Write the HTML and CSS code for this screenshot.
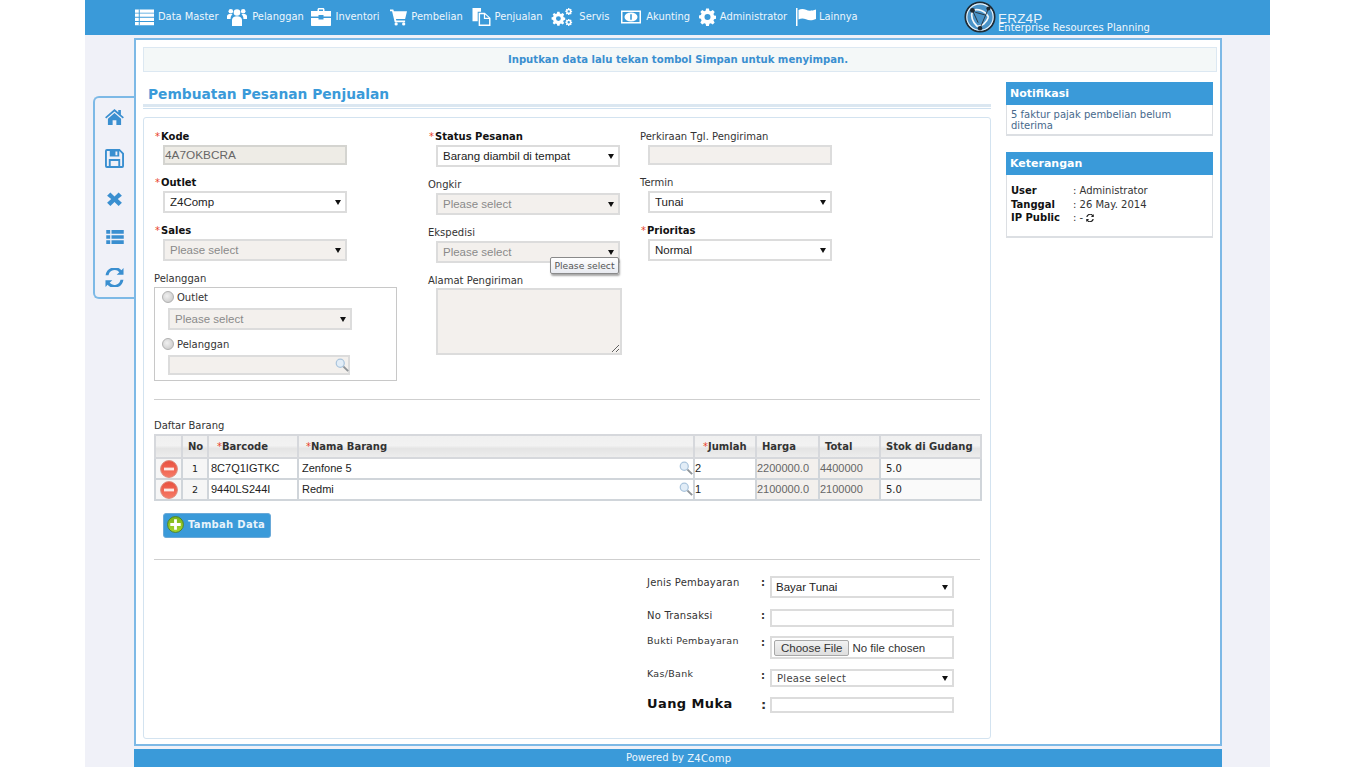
FILE: index.html
```html
<!DOCTYPE html>
<html lang="id">
<head>
<meta charset="utf-8">
<title>Pembuatan Pesanan Penjualan</title>
<link rel="stylesheet" href="styles.css">
</head>
<body>
<svg class="defs" width="0" height="0"><defs>
  <g id="lens"><path d="M9.500 9.500L15 15" stroke="#8f9498" stroke-width="2.200" fill="none"/><circle cx="6" cy="6" r="4.600" fill="#e2edf7" stroke="#aac4dc" stroke-width="1.400"/></g>
  <path id="cog" fill-rule="evenodd" d="M7.500 0h3l.5 2.400 1.500.6L14.600 1.700l2 2-1.300 2.100.7 1.500 2 .5v3l-2 .5-.7 1.500 1.300 2.100-2 2-2.100-1.300-1.500.6-.5 2.300h-3l-.5-2.300-1.500-.6-2.100 1.300-2-2 1.300-2.100L2 10.800l-2-.5v-3l2-.5.7-1.500L1.400 3.700l2-2L5.500 3 7 2.400zM9 5.800a3.200 3.200 0 100 6.400 3.200 3.200 0 000-6.400z"/>
  <path id="sync" d="M19.500 0v7.200h-7.200l2.800-2.800A6.600 6.600 0 003.700 7.700H.6A9.700 9.700 0 0117.300 2.300zM.5 20v-7.200h7.200l-2.800 2.800a6.600 6.600 0 0011.400-3.300h3.100A9.700 9.700 0 012.700 17.700z"/>
  <linearGradient id="redg" x1="0" y1="0" x2="0" y2="1"><stop offset="0" stop-color="#e8503f"/><stop offset="1" stop-color="#f77a66"/></linearGradient>
  <linearGradient id="greeng" x1="0" y1="0" x2="0" y2="1"><stop offset="0" stop-color="#7db41a"/><stop offset="1" stop-color="#a6d62e"/></linearGradient>
  <g id="minus"><circle cx="9" cy="9" r="8.400" fill="url(#redg)" stroke="#dc8a7c"/><path d="M4 7.600h10v2.800H4z" fill="#fbe9e6"/></g>
</defs></svg>
<div class="page">
  <header class="topbar">
    <nav class="nav">
      <a class="nav-item g4"><svg class="ni w19" viewBox="0 0 20 18"><path d="M0 1h20v3.400H0zM0 5.400h20v3.400H0zM0 9.800h20v3.400H0zM0 14.200h20v3.400H0z"/><path class="cut" d="M4.500 1v16.600"/></svg><span>Data Master</span></a>
      <a class="nav-item tight"><svg class="ni w20" viewBox="0 0 20 18"><circle cx="10" cy="4.500" r="3.300"/><circle cx="3.800" cy="3.300" r="2.300"/><circle cx="16.200" cy="3.300" r="2.300"/><path d="M5 18v-6c0-2.500 2-3.800 5-3.800s5 1.300 5 3.800v6zM0 11V8.200C0 6.600 1.600 6 3.800 6c.8 0 1.300.1 1.800.3-.9.700-1.800 1.800-2 3.800V11zM20 11V8.200c0-1.600-1.600-2.200-3.800-2.200-.8 0-1.300.1-1.800.3.900.7 1.800 1.800 2 3.800V11z"/></svg><span>Pelanggan</span></a>
      <a class="nav-item loose"><svg class="ni w20" viewBox="0 0 20 18"><path d="M6.500 3V1.500C6.500.7 7.200 0 8 0h4c.8 0 1.500.7 1.500 1.500V3H20v5.500H12.500V7h-5v1.500H0V3zM8 3h4V1.500H8zM0 10h7.500v1.500h5V10H20v7c0 .6-.4 1-1 1H1c-.6 0-1-.4-1-1z"/></svg><span>Inventori</span></a>
      <a class="nav-item g4"><svg class="ni w17" viewBox="0 0 18 18"><path d="M0 1h3.500l.6 2H18l-2 8H6.300l.4 1.600H16V14.500H5L2.200 3H0z"/><circle cx="6.500" cy="16.300" r="1.700"/><circle cx="14.500" cy="16.300" r="1.700"/></svg><span>Pembelian</span></a>
      <a class="nav-item g4"><svg class="ni w19" viewBox="0 0 19 19"><path d="M0 0h9v4H5.500v10H0z"/><path fill-rule="evenodd" d="M6.500 5H13l6 5.500V19H6.500zM8 6.500v11h9.500v-6h-5.500v-5zM13.300 6.800v3.500h3.900z"/></svg><span>Penjualan</span></a>
      <a class="nav-item g6"><svg class="ni w22" viewBox="0 0 22 19"><use href="#cog" transform="translate(0 4) scale(.8)"/><use href="#cog" transform="translate(14.500 0) scale(.4)"/><use href="#cog" transform="translate(14.500 11.500) scale(.4)"/></svg><span>Servis</span></a>
      <a class="nav-item"><svg class="ni w20" viewBox="0 0 20 15"><path fill-rule="evenodd" d="M0 1h20v13H0zM1.500 2.500v10h17v-10z"/><ellipse cx="10" cy="7.500" rx="6.500" ry="4.500"/><path class="money" d="M9.200 4.800h1.600v5.400H9.200z"/></svg><span>Akunting</span></a>
      <a class="nav-item g4"><svg class="ni w17" viewBox="0 0 18 18"><use href="#cog"/></svg><span>Administrator</span></a>
      <a class="nav-item g3"><svg class="ni w20" viewBox="0 0 20 18"><path d="M0 0h1.500v18H0zM2.500 2C5 .6 7.500.6 10 1.800s5.500 1.200 10-.3v9.500c-4 1.600-7 1.600-10 .3S5 10.300 2.500 11.500z"/></svg><span>Lainnya</span></a>
    </nav>
    <div class="brand">
      <svg class="logo" viewBox="0 0 34 34"><circle cx="17" cy="17" r="15.500" fill="#4a93c8" stroke="#1f2a33" stroke-width="2"/><circle cx="17" cy="17" r="14" fill="none" stroke="#e9f2f8" stroke-width="1.200"/><path d="M9 10c6-2 13 0 17 7M26 17c-2 6-7 10-12 10M14 27C9 22 7 16 9 10" fill="none" stroke="#f4f8fb" stroke-width="1.800"/><path d="M9 10l6 13M26 8l-3 7-11-3M17 29l6-14" fill="none" stroke="#26333d" stroke-width="1"/><circle cx="9" cy="10" r="2.600" fill="#1f2a33"/><circle cx="26" cy="8" r="2.200" fill="#1f2a33"/><circle cx="17" cy="29" r="2.400" fill="#1f2a33"/></svg>
      <div class="brand-text"><span class="brand-name">ERZ4P</span><span class="brand-sub">Enterprise Resources Planning</span></div>
    </div>
  </header>

  <div class="body-row">
    <aside class="toolbar">
      <svg class="tool t-home" viewBox="0 0 20 17"><path d="M10 0l4 3.500V1h2.800v5L20 8.800l-1.200 1.400L10 2.600 1.200 10.200 0 8.800zM3 10.300L10 4.300l7 6V17h-5v-5H8v5H3z"/></svg>
      <svg class="tool t-save" viewBox="0 0 20 20"><path fill-rule="evenodd" d="M2 0h13.500L20 4.500V18a2 2 0 01-2 2H2a2 2 0 01-2-2V2a2 2 0 012-2zM2 2v16h2v-7.500h12V18h2V5.300L15 2v5.800H5V2zM6 12.500V18h8v-5.500zM11 2.600v4h2v-4z"/></svg>
      <svg class="tool t-x" viewBox="0 0 18 17"><path d="M4 .5l5 5 5-5 4 4-5 4 5 4.500-4 4-5-5-5 5-4-4 5-4.500-5-4z"/></svg>
      <svg class="tool t-list" viewBox="0 0 20 16"><path d="M0 0h4.500v4.200H0zM6 0h14v4.200H6zM0 5.900h4.500v4.200H0zM6 5.900h14v4.200H6zM0 11.800h4.500V16H0zM6 11.800h14V16H6z"/></svg>
      <svg class="tool t-sync" viewBox="0 0 20 20"><use href="#sync"/></svg>
    </aside>

    <main class="panel">
      <div class="message">Inputkan data lalu tekan tombol Simpan untuk menyimpan.</div>
      <div class="columns">
        <section class="main-col">
          <h1 class="title">Pembuatan Pesanan Penjualan</h1>
          <form class="form-box">
            <div class="form-cols">
              <div class="col col-a">
                <div class="field"><label class="lbl req"><i>*</i>Kode</label><input class="ctl ro" type="text" value="4A7OKBCRA" readonly></div>
                <div class="field"><label class="lbl req"><i>*</i>Outlet</label><div class="sel"><select class="ctl pick"><option>Z4Comp</option></select></div></div>
                <div class="field"><label class="lbl req"><i>*</i>Sales</label><div class="sel"><select class="ctl pick off"><option>Please select</option></select></div></div>
                <div class="field-last"><label class="lbl">Pelanggan</label>
                  <div class="radio-box">
                    <label class="radio-line"><input class="radio" type="radio" name="p">Outlet</label>
                    <div class="sel"><select class="ctl pick off"><option>Please select</option></select></div>
                    <label class="radio-line second"><input class="radio" type="radio" name="p">Pelanggan</label>
                    <div class="search-box"><svg class="lens" viewBox="0 0 16 16"><use href="#lens"/></svg></div>
                  </div>
                </div>
              </div>
              <div class="col col-b">
                <div class="field"><label class="lbl req"><i>*</i>Status Pesanan</label><div class="sel"><select class="ctl pick"><option>Barang diambil di tempat</option></select></div></div>
                <div class="field"><label class="lbl">Ongkir</label><div class="sel"><select class="ctl pick off"><option>Please select</option></select></div></div>
                <div class="field tip-host"><label class="lbl">Ekspedisi</label><div class="sel"><select class="ctl pick off"><option>Please select</option></select></div><span class="tooltip">Please select</span></div>
                <div class="field-last"><label class="lbl">Alamat Pengiriman</label><textarea class="area"></textarea></div>
              </div>
              <div class="col col-c">
                <div class="field"><label class="lbl">Perkiraan Tgl. Pengiriman</label><input class="ctl off" type="text"></div>
                <div class="field"><label class="lbl">Termin</label><div class="sel"><select class="ctl pick"><option>Tunai</option></select></div></div>
                <div class="field"><label class="lbl req"><i>*</i>Prioritas</label><div class="sel"><select class="ctl pick"><option>Normal</option></select></div></div>
              </div>
            </div>
            <hr class="rule first">
            <div class="table-title">Daftar Barang</div>
            <table class="items">
              <colgroup><col class="c1"><col class="c2"><col class="c3"><col class="c4"><col class="c5"><col class="c6"><col class="c7"><col class="c8"></colgroup>
              <thead><tr><th></th><th class="h-no">No</th><th><i>*</i>Barcode</th><th class="h-name"><i>*</i>Nama Barang</th><th class="h-jml"><i>*</i>Jumlah</th><th class="h-plain">Harga</th><th class="h-plain">Total</th><th class="h-plain">Stok di Gudang</th></tr></thead>
              <tbody>
                <tr><td class="act"><svg class="round" viewBox="0 0 18 18"><use href="#minus"/></svg></td><td class="no">1</td><td class="val">8C7Q1IGTKC</td><td class="val nm"><span>Zenfone 5</span><svg class="lens" viewBox="0 0 16 16"><use href="#lens"/></svg></td><td class="val white">2</td><td class="val ro-cell">2200000.0</td><td class="val ro-cell">4400000</td><td class="stok">5.0</td></tr>
                <tr><td class="act"><svg class="round" viewBox="0 0 18 18"><use href="#minus"/></svg></td><td class="no">2</td><td class="val">9440LS244I</td><td class="val nm"><span>Redmi</span><svg class="lens" viewBox="0 0 16 16"><use href="#lens"/></svg></td><td class="val white">1</td><td class="val ro-cell">2100000.0</td><td class="val ro-cell">2100000</td><td class="stok">5.0</td></tr>
              </tbody>
            </table>
            <button class="add" type="button"><svg class="round plus" viewBox="0 0 18 18"><circle cx="9" cy="9" r="8.400" fill="url(#greeng)" stroke="#4b7f2a"/><path d="M7.500 3.500h3v4h4v3h-4v4h-3v-4h-4v-3h4z" fill="#fff"/></svg>Tambah Data</button>
            <hr class="rule second">
            <div class="pay">
              <div class="pay-row r1"><span class="pl">Jenis Pembayaran</span><span class="colon">:</span><div class="sel"><select class="ctl pick"><option>Bayar Tunai</option></select></div></div>
              <div class="pay-row r2"><span class="pl">No Transaksi</span><span class="colon">:</span><input class="ctl plain" type="text"></div>
              <div class="pay-row r3"><span class="pl small">Bukti Pembayaran</span><span class="colon">:</span><div class="file-box"><input class="file" type="file"></div></div>
              <div class="pay-row r4"><span class="pl small">Kas/Bank</span><span class="colon">:</span><div class="sel"><select class="ctl pick verd"><option>Please select</option></select></div></div>
              <div class="pay-row r5"><span class="pl big">Uang Muka</span><span class="colon bigc">:</span><input class="ctl plain thin" type="text"></div>
            </div>
          </form>
        </section>
        <aside class="side-col">
          <div class="card notif"><h2 class="card-h">Notifikasi</h2><p class="card-t">5 faktur pajak pembelian belum diterima</p></div>
          <div class="card info"><h2 class="card-h">Keterangan</h2>
            <dl class="facts">
              <dt>User</dt><dd>: Administrator</dd>
              <dt>Tanggal</dt><dd>: 26 May. 2014</dd>
              <dt>IP Public</dt><dd>: - <svg class="mini" viewBox="0 0 20 20"><use href="#sync"/></svg></dd>
            </dl>
          </div>
        </aside>
      </div>
    </main>
  </div>
  <footer class="footer"><span class="fa">Powered by</span> <span class="fb">Z4Comp</span></footer>
</div>
</body>
</html>
```

FILE: styles.css
```css
* { box-sizing: border-box; }
html, body { margin: 0; padding: 0; height: 100%; background: #fff; overflow: hidden; }
body { font-family: "DejaVu Sans", Verdana, sans-serif; font-size: 10px; color: #222; }
.page { width: 1185px; height: 767px; margin-left: 85px; background: #f0f1f8; position: relative; }
.topbar { height: 35px; background: #3a9ad9; display: flex; padding-left: 50px; color: #fff; }
.nav { display: flex; align-items: center; gap: 8.750px; width: 828px; padding-bottom: 2px; }
.nav-item { display: flex; align-items: center; gap: 5px; color: #eef6fc; white-space: nowrap; font-size: 9.900px; }
.nav-item.g4 { gap: 4px; }
.nav-item.g6 { gap: 6px; margin-right: 3px; }
.nav-item.g3 { gap: 3px; }
.nav-item.tight { margin-right: -2px; }
.nav-item.loose { margin-right: 2px; }
.ni { fill: #fff; display: block; flex: none; height: 18px; }
.ni .cut { stroke: #3a9ad9; stroke-width: 1; fill: none; }
.ni .money { fill: #3a9ad9; }
.w17 { width: 17px; } .w19 { width: 19px; } .w20 { width: 20px; } .w22 { width: 22px; }
.brand { display: flex; padding-top: 1px; }
.logo { width: 34px; height: 32px; display: block; }
.brand-text { display: flex; flex-direction: column; margin-left: 1px; padding-top: 14px; color: #fff; }
.brand-name { font: 13.500px/8px "Liberation Sans", sans-serif; letter-spacing: .2px; color: #eaf4fb; }
.brand-sub { font-size: 10px; line-height: 10px; color: #f0f7fc; }

.body-row { display: flex; align-items: flex-start; padding: 3px 0 0 8px; }
.toolbar { width: 41px; height: 203px; margin-top: 58px; border: 2px solid #7db9e6; border-right: 0; border-radius: 6px 0 0 6px; background: #f0f1f8; display: flex; flex-direction: column; align-items: center; padding: 11px 0 0; gap: 24px; }
.tool { fill: #3a8fd0; display: block; flex: none; }
.t-home { width: 19px; height: 16px; }
.t-save { width: 19px; height: 19px; }
.t-x { width: 15px; height: 14px; }
.t-list { width: 18px; height: 14px; }
.t-sync { width: 19px; height: 19px; }
.panel { width: 1088px; height: 708px; border: 2px solid #7db9e6; background: #fff; padding: 7px 3px 0 7px; }
.message { height: 25px; background: #f4f8f8; border: 1px solid #dce8f2; color: #3a8fd0; font-weight: 700; font-size: 10.100px; line-height: 24px; text-align: center; padding-right: 4px; }
.columns { display: flex; gap: 15px; margin-top: 10px; }
.main-col { width: 848px; }
.title { margin: 0 0 8px; height: 27px; padding: 4px 0 0 5px; font-size: 13.800px; line-height: 17px; font-weight: 700; color: #3a9ad9; border-bottom: 1px solid #cfe1f0; position: relative; }
.title::after { content: ""; position: absolute; left: 0; right: 0; bottom: 1px; height: 3px; background: #dbe7f1; }
.form-box { display: block; height: 622px; border: 1px solid #d3e3f0; border-radius: 3px; padding: 12px 10px 0; }
.form-cols { display: flex; height: 269px; }
.col-a { width: 274px; } .col-b { width: 212px; } .col-c { width: 200px; }
.field { margin-bottom: 11px; position: relative; }
.lbl { display: block; height: 15px; line-height: 13px; font-size: 10px; color: #333; }
.lbl.req { font-weight: 700; color: #111; }
.lbl i { color: #e8402a; font-style: normal; font-weight: 400; margin: 0 1px; }
.items th i { color: #e8402a; font-style: normal; font-weight: 400; }
.ctl { display: block; width: 184px; height: 20px; margin: 0 0 0 9px; border: 2px solid #dcdcdc; border-radius: 0; background: #fff; padding: 0 5px; font: 11.500px "Liberation Sans", sans-serif; color: #222; outline: 0; }
.col-b .ctl, .col-c .ctl { margin-left: 8px; }
.ctl.ro { background: #eeece6; color: #666; padding-left: 0; border-color: #d4d4d0; font-size: 11.800px; }
.ctl.off { background: #f3f0ed; color: #8a8a8a; opacity: 1; }
.sel { position: relative; width: fit-content; }
.sel::after { content: ""; position: absolute; right: 6px; top: 9px; border: 3px solid transparent; border-top: 5px solid #111; border-bottom: 0; }
.pick { appearance: none; -webkit-appearance: none; height: 22px; padding-left: 5px; }
.radio-box { width: 243px; height: 94px; border: 1px solid #c8c8c8; padding: 2px 0 0 8px; }
.radio-line { display: flex; align-items: center; height: 14px; color: #333; font-size: 10px; gap: 3px; }
.radio-line.second { margin-top: 7px; margin-bottom: 4px; }
.radio { appearance: none; -webkit-appearance: none; width: 12px; height: 12px; margin: 0 0 0 -1px; border: 1px solid #b0b0b0; border-radius: 50%; background: radial-gradient(circle at 40% 40%, #f0f0f0, #c4c4c4); }
.radio-box .sel { margin-top: 4px; }
.radio-box .ctl { margin-left: 5px; }
.search-box { width: 182px; height: 20px; margin-left: 5px; background: #f3f0ed; border: 2px solid #dcdcdc; position: relative; }
.lens { width: 14px; height: 14px; display: block; }
.search-box .lens { position: absolute; right: -1px; top: 1px; }
.tooltip { position: absolute; left: 122px; top: 31px; width: 69px; height: 17px; border: 1px solid #8a8a8a; border-radius: 2px; background: linear-gradient(#fff, #e8eaf0); box-shadow: 1px 2px 2px rgba(0,0,0,.35); font-size: 9.200px; line-height: 15px; text-align: center; color: #555; z-index: 2; }
.area { display: block; width: 186px; height: 67px; margin: -1px 0 0 8px; background: #f3f0ed; border: 2px solid #dcdcdc; outline: 0; resize: both; }
.rule { margin: 0; border: 0; border-top: 1px solid #cfcfcf; }
.table-title { margin-top: 19px; height: 15px; line-height: 13px; color: #333; }
.items { width: 826px; border-collapse: collapse; table-layout: fixed; border: 2px solid #cdd3d9; }
.c1 { width: 27px; } .c2 { width: 26px; } .c3 { width: 90px; } .c4 { width: 396px; } .c5 { width: 62px; } .c6 { width: 63px; } .c7 { width: 61px; } .c8 { width: 101px; }
.items th { height: 23px; padding: 0 0 0 8px; font-size: 10px; font-weight: 700; color: #333; text-align: left; background: linear-gradient(#f0f0f0 0, #f2f2f2 45%, #e4e4e4 60%, #ededed); border: 2px solid #d6d8dc; white-space: nowrap; }
.items th.h-no { padding-left: 5px; }
.items th.h-name { padding-left: 7px; }
.items th.h-jml { padding-left: 8px; }
.items th.h-plain { padding-left: 5px; }
.items td { height: 21px; padding: 0; border: 2px solid #d0d5da; background: #fff; }
.items td.act { background: #f6f6f6; }
.round { width: 18px; height: 18px; display: block; }
.act .round { margin: 0 auto 0 4px; }
.items td.no { text-align: center; font-size: 9.500px; background: #f6f6f6; }
.val { font: 11px "Liberation Sans", sans-serif; color: #222; }
.items td.val { padding: 0 0 2px 2px; }
.items td.nm { padding-left: 3px; position: relative; }
.items td.white { padding-left: 0; }
.nm .lens { position: absolute; right: 0; top: 2px; width: 14px; height: 14px; }
.items td.ro-cell { background: #f3f0ed; color: #666; padding-left: 0; }
.items td.stok { background: #fafafa; font-size: 10px; padding-left: 5px; }
.add { display: flex; align-items: center; gap: 4px; width: 108px; height: 25px; margin: 12px 0 0 9px; padding: 0 0 2px 3px; background: #3a9ad9; border: 1px solid #6aa9d8; border-radius: 3px; color: #e8f3fb; font: 700 10px "DejaVu Sans", sans-serif; letter-spacing: .3px; }
.plus { width: 17px; height: 17px; }
.rule.second { margin-top: 21px; }
.pay { padding-left: 493px; padding-top: 16px; }
.pay-row { display: flex; align-items: flex-start; }
.pl { width: 114px; font-size: 10px; color: #333; line-height: 12px; padding-top: 1px; letter-spacing: .2px; }
.pl.small { font-size: 9.500px; line-height: 10px; padding-top: 0; letter-spacing: .3px; }
.pl.big { font-size: 13px; font-weight: 700; color: #111; line-height: 14px; padding-top: 0; letter-spacing: .4px; }
.colon { width: 9px; font-size: 10px; line-height: 12px; font-weight: 700; color: #333; padding-top: 1px; }
.colon.bigc { font-size: 13px; line-height: 14px; }
.pay .ctl { margin-left: 0; }
.pay-row .ctl, .pay-row .sel { flex: none; }
.r1 { height: 33px; }
.r2 { height: 27px; }
.r3 { height: 33px; }
.r4 { height: 28px; }
.r1 .pick { padding-left: 4px; }
.plain { height: 18px; }
.thin { height: 16px; }
.file-box { width: 184px; height: 23px; border: 2px solid #dcdcdc; padding: 2px 0 0 2px; }
.file { font: 11.500px "Liberation Sans", sans-serif; width: 178px; color: #333; }
.file::file-selector-button { font: 11.500px "Liberation Sans", sans-serif; height: 16px; padding: 0 6px; margin-right: 3px; background: linear-gradient(#f2f2f2, #dedede); border: 1px solid #a8a8a8; border-radius: 2px; color: #333; }
.verd { height: 18px; font: 10px "DejaVu Sans", sans-serif; color: #444; letter-spacing: .3px; }
.r4 .sel::after { top: 7px; }
.side-col { width: 207px; }
.card { background: #fff; border: 1px solid #dcdfe3; border-bottom-width: 2px; }
.notif { height: 54px; margin-bottom: 16px; }
.info { height: 86px; }
.card-h { margin: -1px -1px 0; height: 23px; background: #3a9ad9; color: #fff; font-size: 11px; font-weight: 700; line-height: 23px; padding-left: 4px; }
.card-t { margin: 0; padding: 4px; font-size: 10px; line-height: 11px; color: #47698c; }
.facts { display: grid; grid-template-columns: 62px 1fr; margin: 0; padding: 9px 0 0 4px; font-size: 10px; line-height: 13.500px; color: #333; }
.facts dt { font-weight: 700; color: #111; }
.facts dd { margin: 0; }
.mini { width: 8px; height: 8px; display: inline-block; fill: #222; vertical-align: -1px; }
.footer { position: absolute; left: 49px; top: 749px; width: 1088px; height: 18px; background: #3a9ad9; color: #eef6fc; padding-left: 492px; line-height: 17px; font-size: 10px; }
.fa { font-size: 10px; }
.fb { font-size: 10px; letter-spacing: .3px; position: relative; top: 1px; }
.defs { position: absolute; }
```
